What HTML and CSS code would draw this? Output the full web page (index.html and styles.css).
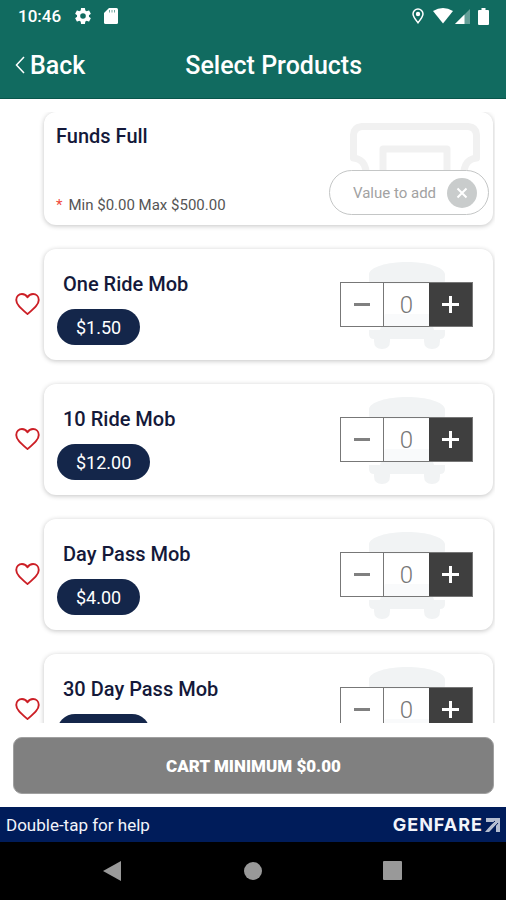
FILE: index.html
```html
<!DOCTYPE html>
<html lang="en">
<head>
<meta charset="utf-8">
<meta name="viewport" content="width=device-width, initial-scale=1">
<title>Select Products</title>
<link rel="stylesheet" href="styles.css">
</head>
<body>
<svg class="defs" aria-hidden="true">
  <symbol id="heart" viewBox="0 0 24 24"><path d="M12 21.200C5.500 15.500 1.200 12 1.200 7.600C1.200 4.200 3.700 1.900 6.700 1.900C9 1.900 10.800 3 12 5C13.200 3 15 1.900 17.300 1.900C20.300 1.900 22.800 4.200 22.800 7.600C22.800 12 18.500 15.500 12 21.200Z" fill="none" stroke="#cc1f26" stroke-width="1.800" stroke-linejoin="round"/></symbol>
  <symbol id="bus" viewBox="0 0 76 88"><path fill="#f1f3f4" d="M0 18V12C1 5 18 0 38 0s37 5 38 12v6q0 4-4 4H4q-4 0-4-4ZM6 22h64v30H6ZM0 68h76v4q0 5-5 5v2q0 8-8 8t-8-8v-2H21v2q0 8-8 8t-8-8v-2q-5 0-5-5ZM16 52h44l5 16H11Z"/><path fill="#fff" d="M0 22h76v30H0Z"/></symbol>
</svg>

<header class="top">
  <div class="status">
    <span class="time">10:46</span>
    <svg class="gear" viewBox="2 2 20 20" aria-hidden="true"><path fill="#fff" d="M19.430 12.980c.04-.32.07-.64.07-.98s-.03-.66-.07-.98l2.110-1.650c.19-.15.24-.42.12-.64l-2-3.460c-.12-.22-.39-.3-.61-.22l-2.490 1c-.52-.4-1.080-.73-1.690-.98l-.38-2.650A.49.49 0 0 0 14 2h-4c-.25 0-.46.18-.49.42l-.38 2.650c-.61.25-1.170.59-1.690.98l-2.490-1c-.23-.09-.49 0-.61.22l-2 3.460c-.13.22-.07.49.12.64l2.110 1.650c-.04.32-.07.65-.07.98s.03.66.07.98l-2.110 1.650c-.19.15-.24.42-.12.64l2 3.460c.12.22.39.3.61.22l2.490-1c.52.4 1.080.73 1.690.98l.38 2.650c.03.24.24.42.49.42h4c.25 0 .46-.18.49-.42l.38-2.650c.61-.25 1.170-.59 1.690-.98l2.490 1c.23.09.49 0 .61-.22l2-3.460c.12-.22.07-.49-.12-.64l-2.110-1.650ZM12 15.500a3.500 3.500 0 1 1 0-7 3.500 3.500 0 0 1 0 7Z"/></svg>
    <svg class="sd" viewBox="0 0 14 16" aria-hidden="true"><path fill="#fff" d="M5 0h7.500Q14 0 14 1.500v13q0 1.500-1.500 1.500h-11Q0 16 0 14.500V5Z"/><path stroke="#116b60" stroke-width=".6" d="M5.500 2v2.500M8 2v2.500M10.500 2v2.500"/></svg>
    <span class="spacer"></span>
    <svg class="pin" viewBox="0 0 12 16" aria-hidden="true"><path d="M6 14.800C3 11 1 8.500 1 6a5 5 0 0 1 10 0c0 2.500-2 5-5 8.800Z" fill="none" stroke="#fff" stroke-width="1.500"/><circle cx="6" cy="6" r="2.200" fill="#fff"/></svg>
    <svg class="wifi" viewBox="0 0 20 16" aria-hidden="true"><path fill="#fff" d="M0 3Q10-3 20 3L10 15.500Z"/></svg>
    <svg class="signal" viewBox="0 0 15 15" aria-hidden="true"><path fill="#fff" opacity=".35" d="M15 0v15H0Z"/><path fill="#fff" d="M9.500 5.500V15H0Z"/></svg>
    <svg class="battery" viewBox="0 0 11 17" aria-hidden="true"><path fill="#fff" d="M3.500 0h4v2H10q1 0 1 1v13q0 1-1 1H1q-1 0-1-1V3q0-1 1-1h2.500Z"/></svg>
  </div>
  <div class="titlebar">
    <a class="back" href="#"><svg viewBox="0 0 10 18" aria-hidden="true"><path d="M9 1 1.500 9 9 17" fill="none" stroke="#fff" stroke-width="1.500"/></svg>Back</a>
    <h1>Select Products</h1>
  </div>
</header>

<main class="list">
  <section class="card funds">
    <div class="info">
      <h2>Funds Full</h2>
      <p><span class="star">*</span>Min $0.00 Max $500.00</p>
    </div>
    <svg class="ticket" viewBox="0 0 130 60" aria-hidden="true"><path fill="none" stroke="#f1f1f1" stroke-width="7" stroke-linejoin="round" d="M17 60C17 44 14 36 3.500 35V12Q4 4 12 3.500H118Q126 4 126.500 12V35C116 36 113 44 113 60M33 60V26H97V60"/></svg>
    <div class="value">
      <input type="text" aria-label="Value to add" placeholder="Value to add">
      <button type="button" aria-label="Clear value"><svg viewBox="0 0 30 30" aria-hidden="true"><path d="M10.500 10.500l9 9M19.500 10.500l-9 9" stroke="#fff" stroke-width="2"/></svg></button>
    </div>
  </section>

  <div class="row">
    <button type="button" class="fav" aria-label="Favorite One Ride Mob"><svg><use href="#heart"/></svg></button>
    <section class="card product">
      <div class="detail"><h2>One Ride Mob</h2><span class="price">$1.50</span></div>
      <svg class="bus" aria-hidden="true"><use href="#bus"/></svg>
      <div class="stepper"><button type="button" aria-label="Remove one"><i class="minus"></i></button><output>0</output><button type="button" class="add" aria-label="Add one"><i class="plus"></i></button></div>
    </section>
  </div>
  <div class="row">
    <button type="button" class="fav" aria-label="Favorite 10 Ride Mob"><svg><use href="#heart"/></svg></button>
    <section class="card product">
      <div class="detail"><h2>10 Ride Mob</h2><span class="price">$12.00</span></div>
      <svg class="bus" aria-hidden="true"><use href="#bus"/></svg>
      <div class="stepper"><button type="button" aria-label="Remove one"><i class="minus"></i></button><output>0</output><button type="button" class="add" aria-label="Add one"><i class="plus"></i></button></div>
    </section>
  </div>
  <div class="row">
    <button type="button" class="fav" aria-label="Favorite Day Pass Mob"><svg><use href="#heart"/></svg></button>
    <section class="card product">
      <div class="detail"><h2>Day Pass Mob</h2><span class="price">$4.00</span></div>
      <svg class="bus" aria-hidden="true"><use href="#bus"/></svg>
      <div class="stepper"><button type="button" aria-label="Remove one"><i class="minus"></i></button><output>0</output><button type="button" class="add" aria-label="Add one"><i class="plus"></i></button></div>
    </section>
  </div>
  <div class="row">
    <button type="button" class="fav" aria-label="Favorite 30 Day Pass Mob"><svg><use href="#heart"/></svg></button>
    <section class="card product">
      <div class="detail"><h2>30 Day Pass Mob</h2><span class="price">$40.00</span></div>
      <svg class="bus" aria-hidden="true"><use href="#bus"/></svg>
      <div class="stepper"><button type="button" aria-label="Remove one"><i class="minus"></i></button><output>0</output><button type="button" class="add" aria-label="Add one"><i class="plus"></i></button></div>
    </section>
  </div>
</main>

<button type="button" class="cart">CART MINIMUM $0.00</button>

<footer>
  <div class="help">
    <span>Double-tap for help</span>
    <span class="brand">GENFARE<svg viewBox="0 0 15 14" aria-hidden="true"><path fill="#b4bdd0" d="M1 0H15V14H11V7L4 14H0L8.500 4H1Z"/><path d="M2 10 10 3M6 13 13 5" stroke="#001c5a" stroke-width="1"/></svg></span>
  </div>
  <nav class="keys">
    <button type="button" aria-label="Back"><svg viewBox="0 0 20 22"><path fill="#999" d="M18 1v20L0 11Z"/></svg></button>
    <button type="button" aria-label="Home"><svg viewBox="0 0 20 22"><circle cx="10" cy="11" r="9" fill="#999"/></svg></button>
    <button type="button" aria-label="Recent apps"><svg viewBox="0 0 20 22"><rect x="0" y="1" width="19" height="19" rx="1" fill="#999"/></svg></button>
  </nav>
</footer>
</body>
</html>
```
FILE: styles.css
```css
* { box-sizing: border-box; }
body {
  margin: 0;
  height: 100vh;
  display: flex;
  flex-direction: column;
  overflow: hidden;
  background: #fff;
  color: #14193a;
  font-family: Roboto, "Liberation Sans", sans-serif;
}
h1, h2, p { margin: 0; }
button { border: 0; padding: 0; background: none; font: inherit; }
svg { display: block; flex: none; }
.defs { position: absolute; width: 0; height: 0; }

.top {
  flex: none;
  background: #116b60;
  border-bottom: 1px solid #08564b;
  color: #fff;
}
.status { display: flex; align-items: center; height: 32px; padding: 0 17px 0 18px; }
.time { font-size: 17px; font-weight: 500; }
.gear { width: 16px; height: 16px; margin-left: 14px; }
.sd { width: 14px; height: 16px; margin-left: 13px; }
.spacer { flex: 1; }
.pin { width: 12px; height: 16px; }
.wifi { width: 20px; height: 16px; margin-left: 9px; }
.signal { width: 15px; height: 15px; margin-left: 2px; }
.battery { width: 11px; height: 17px; margin-left: 8px; }
.titlebar { display: flex; align-items: center; height: 66px; padding: 0 44px 0 15px; }
.back { display: flex; align-items: center; gap: 5px; color: #fff; font-size: 25px; font-weight: 500; text-decoration: none; }
.back svg { width: 10px; height: 18px; }
h1 { flex: 1; font-size: 25px; font-weight: 500; text-align: center; }

.list {
  flex: 1;
  min-height: 0;
  display: flex;
  flex-direction: column;
  gap: 24px;
  margin: 13px 11px 0 0;
  padding-right: 2px;
  overflow: hidden;
}
.card {
  position: relative;
  display: flex;
  align-items: center;
  justify-content: space-between;
  border-radius: 12px;
  background: #fff;
  box-shadow: 0 1px 5px rgba(0, 0, 0, .24);
}
h2 { font-size: 20px; line-height: 24px; font-weight: 500; }
.funds { flex: none; height: 113px; margin-left: 44px; padding: 12px 4px 10px 12px; align-items: stretch; }
.info { display: flex; flex-direction: column; justify-content: space-between; }
.info p { font-size: 15px; line-height: 20px; color: #555; }
.star { color: #f0483c; margin-right: 6px; }
.ticket { position: absolute; right: 13px; top: 11px; width: 130px; height: 60px; }
.value {
  position: relative;
  align-self: flex-end;
  display: flex;
  align-items: center;
  width: 160px;
  height: 45px;
  padding: 0 11px 0 23px;
  border: 1px solid #c4c6c6;
  border-radius: 23px;
  background: #fff;
}
.value input { flex: 1; min-width: 0; border: 0; padding: 0; outline: 0; background: none; font: 15px Roboto, sans-serif; color: #555; }
.value input::placeholder { color: #a2a2a2; opacity: 1; }
.value button { flex: none; width: 30px; height: 30px; border-radius: 50%; background: #c9cccc; }

.row { flex: none; display: flex; align-items: center; }
.fav { display: flex; justify-content: center; flex: none; width: 44px; padding-left: 11px; }
.fav svg { width: 25px; height: 25px; }
.product { flex: 1; height: 111px; padding: 0 20px 0 13px; }
.detail { align-self: flex-start; padding-top: 23px; }
.detail h2 { padding-left: 6px; margin-bottom: 13px; }
.price {
  display: inline-block;
  height: 36px;
  padding: 0 19px;
  border-radius: 18px;
  background: #14264a;
  color: #fff;
  font-size: 18px;
  line-height: 37px;
}
.bus { position: absolute; right: 48px; top: 13px; width: 76px; height: 88px; }
.stepper {
  position: relative;
  display: grid;
  grid-template-columns: 42px 46px 43px;
  height: 45px;
  border: 1px solid #777;
  background: rgba(255, 255, 255, .6);
}
.stepper button { display: flex; align-items: center; justify-content: center; background: #fff; }
.stepper output { display: flex; align-items: center; justify-content: center; border-left: 1px solid #777; color: #777; font-size: 24px; font-weight: 300; }
.stepper .add { background: #3f3f3f; }
.minus { width: 16px; height: 3px; background: #808080; }
.plus { width: 17px; height: 17px; background: linear-gradient(#fff, #fff) center / 17px 3px no-repeat, linear-gradient(#fff, #fff) center / 3px 17px no-repeat; }

.cart {
  flex: none;
  height: 57px;
  margin: 14px 12px 13px 13px;
  border: 1px solid #a0a0a0;
  border-radius: 9px;
  background: #808080;
  color: #fff;
  font-size: 17px;
  font-weight: 900;
}
.help {
  display: flex;
  align-items: center;
  justify-content: space-between;
  height: 35px;
  padding: 0 6px;
  background: #001c5a;
  color: #f2f4fa;
  font-size: 17px;
}
.brand { display: flex; align-items: center; gap: 2px; font-family: Inter, sans-serif; font-size: 18px; font-weight: 700; letter-spacing: 1px; }
.brand svg { width: 15px; height: 14px; }
.keys { display: flex; justify-content: center; gap: 120px; height: 58px; background: #000; }
.keys svg { width: 20px; height: 22px; }
```
